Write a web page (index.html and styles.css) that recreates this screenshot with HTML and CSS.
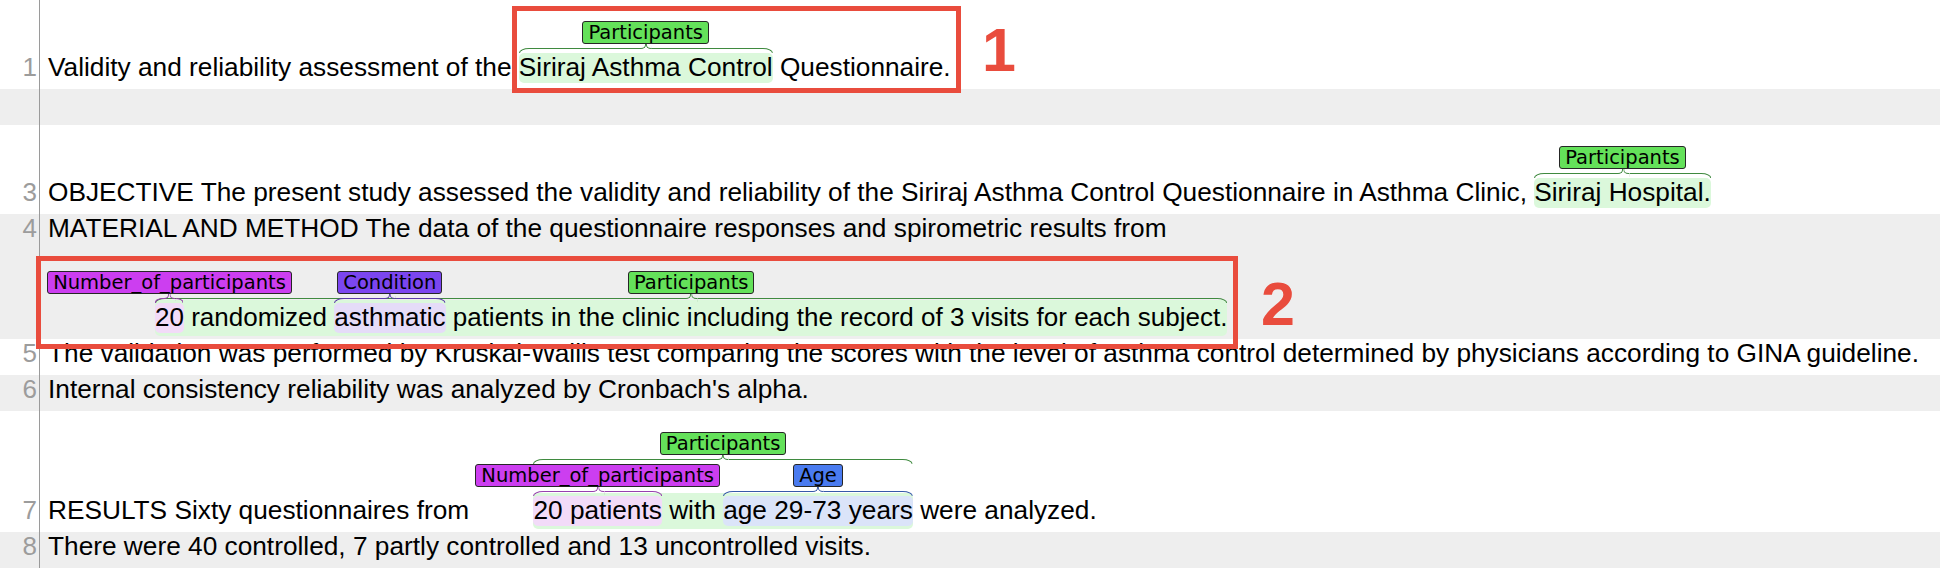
FILE: index.html
```html
<!DOCTYPE html>
<html lang="en">
<head>
<meta charset="utf-8">
<title>brat annotation</title>
<link rel="stylesheet" href="styles.css">
</head>
<body>
<div class="page">

  <div class="row">
    <div class="num">1</div>
    <div class="txt ann-row">Validity and reliability assessment of the <span class="ann c-part"><span class="head"><span class="lbl">Participants</span></span><span class="brace"><i></i><i></i></span><span class="body">Siriraj Asthma Control</span></span> Questionnaire.</div>
  </div>

  <div class="row alt">
    <div class="num"></div>
    <div class="txt empty"></div>
  </div>

  <div class="row">
    <div class="num">3</div>
    <div class="txt ann-row">OBJECTIVE The present study assessed the validity and reliability of the Siriraj Asthma Control Questionnaire in Asthma Clinic, <span class="ann c-part"><span class="head"><span class="lbl">Participants</span></span><span class="brace"><i></i><i></i></span><span class="body">Siriraj Hospital.</span></span></div>
  </div>

  <div class="row alt">
    <div class="num first">4</div>
    <div class="txt">
      <div class="line">MATERIAL AND METHOD The data of the questionnaire responses and spirometric results from</div>
      <div class="line wrap"><span class="ann outer c-part"><span class="head"><span class="lbl">Participants</span></span><span class="brace"><i></i><i></i></span><span class="body"><span class="ann flat c-num"><span class="head"><span class="lbl">Number_of_participants</span></span><span class="brace"><i></i><i></i></span><span class="body">20</span></span> randomized <span class="ann flat c-cond"><span class="head"><span class="lbl">Condition</span></span><span class="brace"><i></i><i></i></span><span class="body">asthmatic</span></span> patients in the clinic including the record of 3 visits for each subject.</span></span></div>
    </div>
  </div>

  <div class="row">
    <div class="num">5</div>
    <div class="txt">The validation was performed by Kruskal-Wallis test comparing the scores with the level of asthma control determined by physicians according to GINA guideline.</div>
  </div>

  <div class="row alt">
    <div class="num">6</div>
    <div class="txt">Internal consistency reliability was analyzed by Cronbach's alpha.</div>
  </div>

  <div class="row">
    <div class="num">7</div>
    <div class="txt ann-row">RESULTS Sixty questionnaires from <span class="ann outer gap c-part"><span class="head"><span class="lbl">Participants</span></span><span class="brace"><i></i><i></i></span><span class="body"><span class="ann c-num"><span class="head"><span class="lbl">Number_of_participants</span></span><span class="brace"><i></i><i></i></span><span class="body">20 patients</span></span> with <span class="ann c-age"><span class="head"><span class="lbl">Age</span></span><span class="brace"><i></i><i></i></span><span class="body">age 29-73 years</span></span></span></span> were analyzed.</div>
  </div>

  <div class="row alt">
    <div class="num">8</div>
    <div class="txt">There were 40 controlled, 7 partly controlled and 13 uncontrolled visits.</div>
  </div>

  <div class="callout box1"></div>
  <div class="mark mark1">1</div>
  <div class="callout box2"></div>
  <div class="mark mark2">2</div>
</div>
</body>
</html>
```

FILE: styles.css
```css
html, body {
  margin: 0;
  padding: 0;
  background: #ffffff;
}

.page {
  position: relative;
  width: 1940px;
  height: 570px;
  overflow: hidden;
  font-family: "Liberation Sans", Arial, sans-serif;
  font-size: 26.25px;
  color: #000;
}

.row {
  display: flex;
  background: #ffffff;
}

.row.alt {
  background: #eeeeee;
}

.num {
  flex: none;
  width: 37px;
  padding: 0 2px 7px 0;
  border-right: 1px solid #9a9a9a;
  display: flex;
  align-items: flex-end;
  justify-content: flex-end;
  font-size: 26px;
  line-height: 29px;
  color: #9c9c9c;
}

.num.first {
  align-items: flex-start;
}

.txt {
  flex: 1;
  padding: 0 0 7px 8px;
  line-height: 29px;
  white-space: nowrap;
}

.txt.ann-row {
  padding-top: 21px;
}

.txt.empty {
  min-height: 29px;
}

.line.wrap {
  padding-top: 28px;
  padding-left: 107px;
  font-size: 26px;
}

/* annotated span */
.ann {
  display: inline-block;
  position: relative;
  z-index: 0;
  vertical-align: baseline;
}

.ann.flat {
  margin-top: -32px;
}

.ann.gap {
  margin-left: 57px;
}

.head {
  display: flex;
  justify-content: center;
  height: 23px;
  width: 0;
  min-width: 100%;
}

.lbl {
  flex: none;
  box-sizing: border-box;
  height: 23px;
  padding: 0 5px;
  border: 1px solid #262626;
  border-radius: 3px;
  background: var(--lab);
  font-family: "DejaVu Sans", sans-serif;
  font-size: 19.5px;
  line-height: 21px;
  color: #000;
}

.brace {
  display: flex;
  height: 9px;
  color: var(--br);
}

.brace i {
  flex: 1;
  display: flex;
  min-width: 0;
}

.brace i::before {
  content: "";
  flex: 1;
  margin-top: 4px;
  border-top: 1px solid currentColor;
  border-left: 1px solid currentColor;
  border-top-left-radius: 10px 5px;
}

.brace i::after {
  content: "";
  flex: none;
  width: 5px;
  height: 4px;
  border-bottom: 1px solid currentColor;
  border-right: 1px solid currentColor;
  border-bottom-right-radius: 5px 4px;
}

.brace i:last-child {
  transform: scaleX(-1);
}

.body {
  display: block;
  position: relative;
}

.body::before {
  content: "";
  position: absolute;
  left: 0;
  right: 0;
  bottom: -1px;
  height: 30px;
  border-radius: 5px;
  background: var(--hl);
  z-index: -1;
}

.ann.outer > .body::before {
  bottom: -4px;
  height: 36px;
}

.c-part { --lab: #64e15a; --hl: #dbf8db; --br: #3f8a3f; }
.c-num  { --lab: #cc3ef0; --hl: #f2dbf8; --br: #9641ad; }
.c-cond { --lab: #7b46ef; --hl: #e5dcf8; --br: #5c3ba9; }
.c-age  { --lab: #4a7bf0; --hl: #dbe4f9; --br: #3659a8; }

/* red callouts drawn over the view */
.callout {
  position: absolute;
  box-sizing: border-box;
  border: 5px solid #e94c3d;
}

.box1 {
  left: 512px;
  top: 6px;
  width: 449px;
  height: 87px;
}

.box2 {
  left: 36px;
  top: 256px;
  width: 1202px;
  height: 93px;
}

.mark {
  position: absolute;
  font-family: "Liberation Sans", Arial, sans-serif;
  font-weight: bold;
  font-size: 61px;
  line-height: 61px;
  color: #e94c3d;
}

.mark1 {
  left: 982px;
  top: 20px;
}

.mark2 {
  left: 1261px;
  top: 274px;
}
```
